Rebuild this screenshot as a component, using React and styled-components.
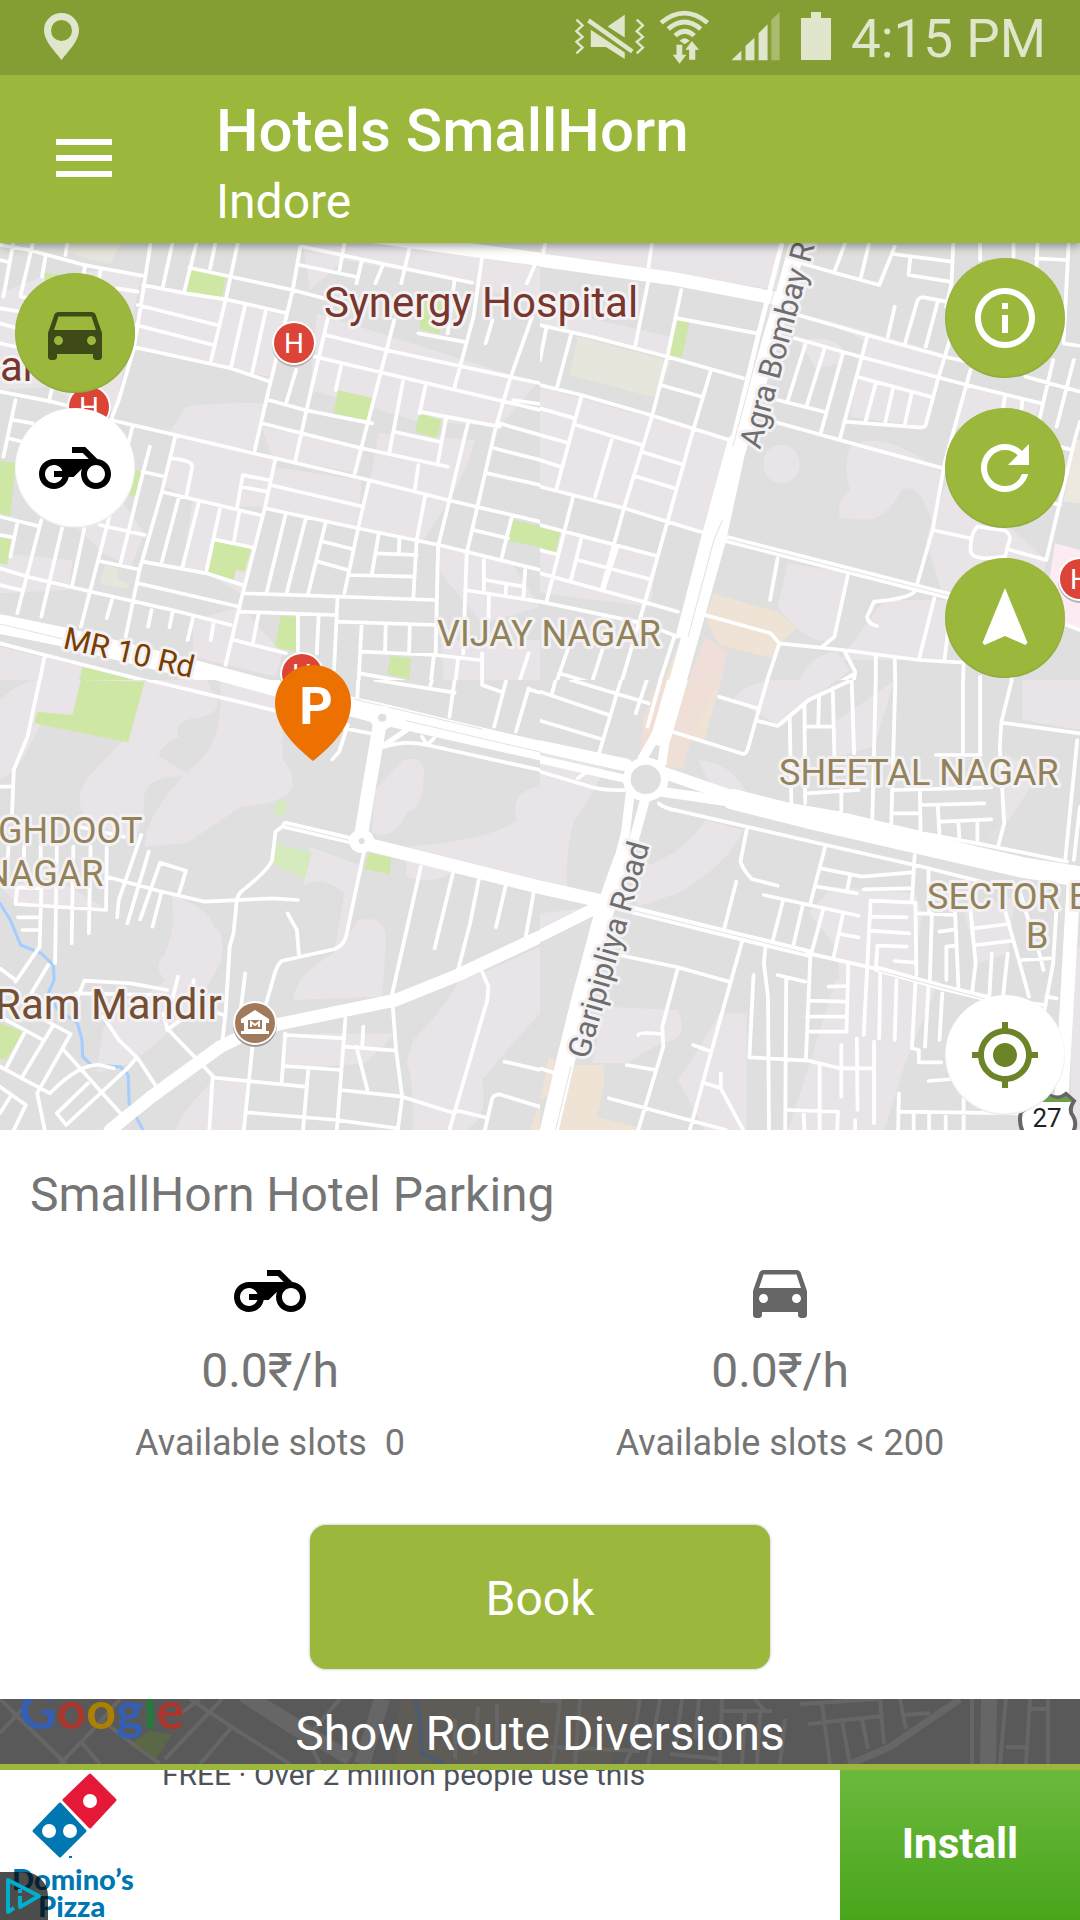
import React from 'react'
import styled, { createGlobalStyle } from 'styled-components'
import { MdDirectionsCar, MdInfoOutline, MdMyLocation, MdNavigation, MdRefresh } from 'react-icons/md'

const GlobalStyles = createGlobalStyle`
  * {
    box-sizing:border-box;
  }

  body {
    margin:0;
    font-family:Roboto, sans-serif;
    background:#fff;
  }

  h1, h2, p {
    margin:0;
    font-weight:400;
  }

  button {
    border:0;
    padding:0;
    font-family:inherit;
    cursor:pointer;
  }

  svg {
    display:block;
  }
`;

const Page = styled.div`
  display:flex;
  flex-direction:column;
  min-height:100vh;
`;

const StatusBar = styled.div`
  position:relative;
  z-index:2;
  display:flex;
  align-items:center;
  height:75px;
  padding:0 34px 3px 44px;
  background:#859e33;
  color:#e0e6cb;
`;

const StatusIcons = styled.div`
  display:flex;
  align-items:center;
  gap:20px;
  margin-left:auto;
`;

const IconPair = styled.div`
  display:flex;
  align-items:center;
  gap:12px;
`;

const Clock = styled.span`
  font-size:53px;
  line-height:72px;
  padding-top:6px;
`;

const Header = styled.header`
  position:relative;
  z-index:1;
  display:flex;
  align-items:center;
  gap:104px;
  height:168px;
  padding:0 0 2px 56px;
  background:#9bb83c;
  color:#fff;
  box-shadow:0 2px 10px rgba(0,0,0,0.45);
`;

const MenuButton = styled.button`
  background:none;
  color:inherit;
`;

const Heading = styled.div`
  padding-top:18px;
`;

const Title = styled.h1`
  font-size:60px;
  font-weight:500;
  line-height:70px;
`;

const Subtitle = styled.p`
  font-size:48px;
  line-height:72px;
`;

const MapArea = styled.main`
  position:relative;
  flex:1;
  min-height:600px;
  overflow:hidden;
  background:#dfdfdf;
`;

const MapCanvas = styled.svg`
  position:absolute;
  inset:0;
  width:100%;
  height:100%;
`;

const Floating = styled.div`
  position:absolute;
  ${({ $side }) => $side}:15px;
  ${({ $bottom, $top }) => ($bottom ? `bottom:${$bottom}px` : `top:${$top}px`)};
  display:flex;
  flex-direction:column;
  gap:${({ $gap }) => $gap || 0}px;
`;

const RoundButton = styled.button`
  display:flex;
  align-items:center;
  justify-content:center;
  width:120px;
  height:120px;
  border-radius:50%;
  background:${({ $light }) => ($light ? '#fff' : '#9bb83c')};
  color:${({ $tint }) => $tint || '#fff'};
  box-shadow:inset 0 -1px 2px rgba(0,0,0,0.12);
`;

const Panel = styled.section`
  display:flex;
  flex-direction:column;
  padding-bottom:30px;
  background:#fff;
  color:#757575;
`;

const PlaceName = styled.h2`
  padding:37px 30px 0;
  font-size:48px;
  line-height:56px;
`;

const Rates = styled.div`
  display:grid;
  grid-template-columns:1fr 1fr;
  padding:32px 45px 0 15px;
`;

const Rate = styled.div`
  display:flex;
  flex-direction:column;
  align-items:center;
  color:${({ $tint }) => $tint};
`;

const Price = styled.p`
  padding-top:16px;
  font-size:48px;
  line-height:56px;
  color:#757575;
`;

const Slots = styled.p`
  padding-top:20px;
  font-size:36px;
  line-height:48px;
  color:#757575;
`;

const BookButton = styled.button`
  align-self:center;
  width:460px;
  max-width:90%;
  height:144px;
  margin-top:58px;
  padding-top:2px;
  border-radius:16px;
  background:#9bb83c;
  color:#fff;
  font-size:48px;
  box-shadow:0 0 3px rgba(0,0,0,0.3);
`;

const Diversions = styled.button`
  position:relative;
  height:71px;
  overflow:hidden;
  border-bottom:6px solid #9bb83c;
  background:#595959;
  color:#fff;
  font-size:48px;
  line-height:65px;
`;

const DiversionsLabel = styled.span`
  position:relative;
  display:block;
  padding-top:2px;
`;

const Ad = styled.aside`
  position:relative;
  display:flex;
  height:150px;
  overflow:hidden;
  background:#fff;
`;

const AdText = styled.p`
  flex:1;
  margin:-13px 0 0 27px;
  font-size:30px;
  line-height:36px;
  color:#4e535b;
  white-space:nowrap;
`;

const AdChoices = styled.a`
  position:absolute;
  left:0;
  bottom:0;
  width:48px;
  height:48px;
  border-top-right-radius:24px;
  background:rgba(0,0,0,0.7);
`;

const InstallButton = styled.button`
  width:240px;
  padding-bottom:4px;
  background:linear-gradient(#6cb83c, #49a61c);
  color:#fff;
  font-size:42px;
  font-weight:700;
`;

// The map is split in four tiles, each one drawn on its own 1568x1350 grid.
const TILES = [
  {
    id: 'nw',
    x: 0,
    y: 240,
    blocks: [
      'M0 160L120 110 300 90 410 110 400 150 330 540 140 440 0 450Z',
      'M410 130L840 220 780 410 670 385 400 320Z',
      'M540 500Q640 485 775 490L740 630 660 620 490 580Z',
      'M510 590L800 660 770 800 660 800 560 780 480 740Z',
      'M880 20L1180 20 1568 80V200L1360 130 1000 60 900 150Z',
      'M920 220L1560 430 1450 560 1200 540 900 450Z',
      'M760 560L1060 620 1040 700 790 650Z',
      'M790 680L1050 720 1040 860 770 800Z',
      'M560 780L760 830 700 1060 600 1000 530 980Z',
      'M560 1140L700 1100 820 1240 800 1310 560 1250Z',
      'M1100 580L1380 600Q1350 720 1230 900L1050 860Z',
      'M100 740L350 780 420 880 380 980 300 940Z',
      'M0 940L210 960 200 1050 0 1060Z',
      'M1270 920L1480 960 1568 1100 1400 1150 1280 1000Z',
      'M1280 1200H1568V1350H1290Z',
      'M0 1220L240 1280 220 1350H0Z',
    ],
    areas: [
      ['#e6e6dc', 'M200 9H350L320 72 200 40ZM305 975L345 985 340 1018 375 1032 370 1048 290 1030Z'],
      ['#cfe7a4', 'M552 88L656 112 642 182 540 156ZM982 450L1082 475 1068 545 968 518ZM1218 520L1282 540 1268 594 1206 575ZM620 903L730 925 710 995 685 990 678 1020 600 998ZM1492 840L1568 858V922L1475 902ZM815 1128L862 1130V1236L798 1220ZM1135 1248L1193 1255 1188 1318 1124 1302ZM240 1280L420 1328 415 1350H226ZM0 663L45 668 30 828 0 820ZM0 892L38 900 20 975 0 970ZM395 690L410 695 395 768 375 764ZM130 97L180 108 130 130ZM1225 170L1290 190 1275 282 1218 265Z'],
    ],
    roads: [
      'M0 15L85 30 245 75 412 107M0 60L20 65M38 12L10 170M95 12L60 165M195 12L190 45M133 45L122 110M248 75L242 105M293 85L288 115',
      'M437 12L390 320 345 480 322 540M340 145L400 155M415 135L540 160 655 178 828 218M500 12L472 145M570 12L535 155M625 12L610 85M690 12L655 180 612 365',
      'M550 83L850 150 960 180M872 20L850 150 780 450 740 630M1000 10L985 95M880 20L1060 60 1370 128M870 75L1040 112M1050 65L1035 130M1110 80L1090 130M1190 20L1165 130',
      'M1320 120L1300 280M1400 50L1375 230 1320 440M1555 70L1530 130M400 195L630 255M395 255L620 315M385 320L670 385 785 425M712 195L670 385M772 210L732 400',
      'M945 285L1120 330 1568 430M915 350L1240 430 1568 510M1215 280L1345 305M1145 240L1110 380 1030 700M960 200L890 510 858 660M780 480L885 510 1080 550M760 550L1050 625 1300 680',
      'M860 390L832 485M990 380L975 450M1170 425L1130 640M1235 440L1218 520M1218 515L1450 560M1145 575L1275 605M1295 535L1270 675M1360 545L1305 780 1272 920 1265 1240',
      'M1545 230L1480 420 1440 560 1355 940 1345 1240M1430 240L1410 310M1490 480L1568 492M1450 550L1568 585M1435 625L1568 660M1415 700L1568 735',
      'M322 540L510 585 800 655 1070 720 1300 780 1568 845M1070 730L1040 865 1000 1060M1215 675L1205 745M1235 765L1210 900 1200 1075M800 655L770 800 700 1080 655 1275',
      'M495 655Q560 660 558 680L542 765M510 585L470 755 405 990 365 1190M470 755L755 825M780 720L705 705 688 805M700 740L775 755M785 735L1055 800',
      'M520 770L470 965M578 785L530 980M640 800L600 990M695 815L680 900M620 898L730 922M770 805L1040 865 1275 915 1355 935 1568 990',
      'M830 820L775 1055M888 835L832 1060M945 850L895 1060M940 905L1025 928M925 965L1010 990M1100 880L1080 1000M1160 895L1158 940M1095 940L1210 945M1010 1005L1200 1010',
      'M710 1060L1265 1080M695 1115L970 1125M980 1075L970 1290M980 1145L1265 1155M750 1125L735 1205M865 1125V1235M925 1130L920 1240M680 1200L830 1240',
      'M1050 1155L1040 1350M1120 1155L1118 1235M1190 1155L1188 1235M1050 1235L1265 1245 1390 1260M1375 870L1475 895M1485 835L1455 960M1405 960V1050M1410 1020L1520 1040M1350 1050L1568 1085',
      'M1525 990L1520 1070M1470 1035L1468 1060M1420 1060L1418 1140M1400 1240V1330L1470 1350M1535 1240L1500 1350M1045 1300L1310 1350M1260 1245L1250 1335M1330 1255L1320 1350',
      'M0 830L110 858M120 840L50 1120M50 850L30 950M0 885L40 892M180 865L120 1130M245 865L210 1035M320 820L235 1160M290 855L420 885M285 962L400 988M0 985L80 1010 265 1055 500 1110 670 1155',
      'M0 1035L60 1050M415 965L600 1000 705 1035M400 1030L695 1100M385 560L350 700M435 620L405 740 350 970M415 695L470 708M325 1080L310 1135M440 1110L430 1160M500 1120L492 1162M560 1135L545 1200M620 1150L612 1200',
      'M0 455L150 485 210 500M150 450L142 485M45 480L10 650M40 540L95 550M25 595L65 605M0 310L45 320M0 250L50 265M0 205L60 215M60 170L120 180',
      'M0 1210L130 1245 530 1350M130 1245L110 1350',
    ],
    main: [
      ['M0 1152L180 1190 560 1288 820 1360', 58],
      ['M1060 -14L1568 58', 40],
    ],
    seams: ['M0 1152L180 1196'],
  },
  {
    id: 'ne',
    x: 540,
    y: 240,
    blocks: [
      'M0 9H700L690 150 0 40Z',
      'M0 200L380 290 370 350 0 250Z',
      'M0 440L550 600 470 870 370 845 0 740Z',
      'M750 300Q900 280 880 370L800 385Z',
      'M800 230L1170 340 1120 560 900 530 940 300Z',
      'M648 672A53 58 0 1 0 754 672A53 58 0 1 0 648 672Z',
      'M900 620Q1000 560 1165 700L1140 850Q1100 720 1050 750 1000 850 930 838L870 835Q860 780 900 750 880 680 900 620Z',
      'M720 970L900 1000 850 1200Q780 1220 690 1100Z',
      'M1120 900L1190 700 1470 960 1430 1180 1180 1100Z',
      'M1000 1080L1200 1080 1180 1260H870Z',
      'M0 860L340 950 320 1100 0 1060Z',
      'M740 1350Q780 1240 860 1235L900 1290 830 1350Z',
      'M1240 440L1450 490 1420 600 1200 560Z',
    ],
    areas: [
      ['#e6e6dc', 'M110 290L380 365 360 420 330 472 85 405Z'],
      ['#ece8df', 'M1555 600H1568V790L1520 785Z'],
      ['#fcebf3', 'M1495 910L1568 930V1170L1465 1120Z'],
      ['#eee3d5', 'M505 1062L690 1115 745 1165 695 1212 672 1255 520 1215 480 1130ZM460 1060L350 1350H380L470 1080Z'],
      ['#efdfd8', 'M480 1190L545 1235 520 1350H420Z'],
      ['#cfe7a4', 'M400 240L434 245 412 352 376 345ZM0 860L60 875 45 938 0 928Z'],
    ],
    roads: [
      'M15 12L8 45M325 12L315 80M315 120L275 325M410 150L370 350 325 530 245 800 180 1045M400 235L630 280M0 255L150 290 370 350 590 415M18 265L0 360M90 285L50 440',
      'M0 435L120 465 320 525 550 600M495 395L445 570 370 845 305 1085 230 1350M350 435L470 470M0 505L100 535M120 470L48 745M105 555L295 615M0 585L80 608M0 660L60 680M295 635L410 672M275 708L390 745M208 600L160 770',
      'M0 740L245 805 370 845 480 880M0 855L340 948M95 775L20 1080M120 895L90 1020M110 960L320 1018M225 920L185 1045M0 930L45 942M0 1000L300 1085 400 1115M0 1085L300 1150 400 1190M55 1300L220 1350M80 1230L40 1350M190 1200L150 1330M390 1190L340 1350',
      'M760 70L860 100 985 135 1030 20M885 12L855 95M955 12L930 120M1025 42L1195 65M1075 55L1070 105 1190 125M1200 12L1195 130 1180 200M1278 12V60M1375 12V50M1445 12L1440 120M1535 12L1520 310M1440 55L1530 60',
      'M750 225L950 285 1175 350 1240 365M740 295L930 350 1240 435 1455 490M1030 200L1010 290M1060 310L1095 185Q1100 170 1115 172L1180 185M1155 185L1120 320M950 290L870 600',
      'M1190 300L1155 420 1120 555Q1115 564 1100 562L885 545M920 410L1135 470M975 430L945 545M1025 445L1003 545M1080 455L1060 550M770 315L720 480M825 330L775 495M878 345L815 580M690 480L825 515M680 545L870 600 1170 685',
      'M1250 390L1175 670 1140 870 1090 1050M1350 470L1345 500M1400 485L1398 510M1490 360L1445 560M1550 360L1500 560M1410 410L1568 455M1520 310L1568 318M1568 545L1555 590 1470 960M1510 620L1545 630M1490 790L1510 795M1140 870L1250 895',
      'M1340 870L1270 860Q1250 880 1250 930 1250 955 1300 955L1350 950 1365 895Q1360 870 1340 870M1365 930L1470 960M690 955L668 1080M895 1000L855 1190 820 1220M1090 1050Q1080 1075 970 1085L950 1130Q950 1150 978 1158M1145 1075L1100 1260M1195 1090L1175 1255M1530 1155L1568 1170',
      'M480 1125L670 1180 695 1210 880 1230 1100 1260 1230 1268M695 1210L650 1350M885 1235L915 1295 908 1350M915 1300L830 1350M975 1245V1350M1030 1255L1032 1350M1230 1265L1228 1350M1278 1310V1350M1370 1310L1365 1350',
    ],
    main: [
      ['M0 60L380 115 700 178', 40],
      ['M705 0L640 260 560 600', 14],
      ['M752 0L705 180 570 640 515 900 390 1360', 50],
      ['M560 600L485 880 410 1180', 28],
      ['M545 898L900 992 1090 1042 1190 1068', 24],
    ],
    seams: ['M545 898L900 992 1090 1042 1190 1068', 'M530 840L505 900 430 1190', 'M688 120L650 270 560 620'],
  },
  {
    id: 'sw',
    x: 0,
    y: 680,
    blocks: [
      'M0 60Q60 0 120 0L80 170 40 270 0 300Z',
      'M110 0H600L630 60Q640 110 560 115 500 130 520 170 430 220 480 240L560 290Q400 280 420 380L390 500 240 400Q220 350 250 300 300 240 360 180L120 130 60 250 80 150Z',
      'M640 0H820V240Q850 260 850 320 830 370 700 380 600 450 540 490L420 500Q420 400 560 260 640 200 640 60Z',
      'M500 640Q620 700 620 740 660 760 640 850L560 1000 380 1150 280 1180 300 1040 480 900Q440 860 480 820 510 740 500 680Z',
      'M900 500L1055 560 1005 770 1040 720Q1130 700 1120 800L1110 950 850 960Q860 880 970 820L1000 640Q930 580 880 620Z',
      'M1170 240Q1240 220 1230 300 1230 380 1180 400 1150 480 1080 460L1090 330Z',
      'M1568 320Q1480 330 1500 420 1430 480 1180 500L1180 590Q1280 620 1330 560L1568 610Z',
      'M1420 870L1568 800V1000Q1480 1100 1400 1200 1420 1320 1350 1350H1200Q1200 1180 1180 1150L1200 1080Q1320 950 1330 900Z',
      'M620 1200L720 1210 710 1350H510Q530 1290 620 1200Z',
      'M830 1060H1150L1060 1150 820 1170Z',
      'M0 620L120 600 200 620 300 680 60 680Z',
    ],
    areas: [
      ['#cfe7a4', 'M235 0L420 5 372 187 100 130 108 95 210 105ZM1072 518L1137 533 1130 583 1058 566ZM0 1030L70 1055 15 1140 0 1135Z'],
      ['#d5eabd', 'M805 360L833 365 825 408 795 400ZM802 492L905 518 885 597 788 550Z'],
      ['#eee3d5', 'M1568 1260L1540 1350H1568Z'],
    ],
    water: 'M0 670L30 720 60 795 120 820 155 855 157 900 140 940 165 985 225 1030 238 1080 240 1130 265 1155 350 1160 372 1185 375 1270 415 1350',
    roads: [
      'M430 0L800 92M115 0L80 170 40 270 35 400M0 320H35M1000 145L1100 165M1120 200Q1170 180 1240 195L1568 270M1010 135L985 215 965 238M1225 170L1240 195 1260 175',
      'M830 432L800 455 790 540Q780 570 700 635 685 650 685 690L678 760 667 800 655 1000 645 1090M310 590L460 632 595 665 790 655 865 660M1058 510L1005 770Q995 800 970 808L820 842Q805 850 795 890L770 980',
      'M835 700L862 750 868 825M712 880L700 980M1222 560L1138 945 1150 1110 1168 1250 1155 1350M1315 580L1262 805M1392 590L1365 730 1330 870M1470 610L1440 742M1550 635L1525 780M1400 875L1418 920 1415 960 1305 1350',
      'M230 440L360 470M25 500L20 560M70 500L68 600M118 500V600M165 500L160 850M213 500L208 790M263 500L258 760M310 500L308 690 45 672 50 622 120 625 115 800 45 905M410 465L345 660 340 712M432 515L370 730M407 718L465 548 540 572 520 640M468 640L443 740',
      'M52 712H115M65 750H115M140 855L85 950M0 865L45 900M485 930L380 910 245 902 215 980M220 940L480 945M517 890L500 960M562 900L560 940',
      'M0 1010L125 1080M70 1060L20 1160M155 1035L65 1190M130 1020L205 1062 108 1240 130 1350M185 1110L350 1300M0 1160L145 1240Q230 1150 290 1155L330 1165M255 1210L165 1300 192 1335 370 1165 395 1135M300 1010L345 1080 400 1135 460 1230',
      'M475 1000L485 1045 620 1190M550 1000L485 1050M590 985L650 1005M0 1220L75 1275 40 1350M30 1250L0 1300M620 1193L885 1220M617 1195L608 1350M733 1100L708 1350M828 1060L818 1205M830 1065L1000 1075M825 1158L990 1170',
      'M1003 1015L978 1350M1000 1100L1150 1112M1055 1040L1052 1100M1035 1100L1068 1235M895 1170L880 1350M990 1230L1168 1250 1320 1300M715 1297L978 1320 1155 1345M1465 1145L1568 1170M1568 1280L1450 1243Q1430 1245 1428 1260L1408 1350M1320 1290L1408 1312',
      'M1040 0L1038 50M1320 0L1305 110M1470 0L1435 140M1535 25L1498 155M1090 0L1320 38M1400 0V15L1455 35M1535 28L1568 38M1255 0L1250 15',
      'M1020 55L1110 75 1568 190',
    ],
    main: [
      ['M590 -40L820 25 1110 105 1568 212', 58],
      ['M1105 120L1070 330 1046 480', 40],
      ['M830 435L1045 487', 24],
      ['M1045 487L1568 622', 40],
      ['M320 1350L440 1250 640 1100 740 1050 820 1030 1150 960 1330 885 1568 770', 38],
      ['M1110 200L1180 150', 16],
    ],
    seams: ['M1180 122L1568 216', 'M830 435L1020 482', 'M1030 58L1400 148'],
    rounds: [[1110, 113, 26, 12], [1050, 483, 26, 9]],
  },
  {
    id: 'se',
    x: 540,
    y: 680,
    blocks: [
      'M0 180L190 240Q170 330 100 420 70 520 80 640L0 630Z',
      'M0 700L170 680 0 780Z',
      'M560 60Q600 0 700 0H860L700 140Z',
      'M460 240Q560 250 600 340L500 330Z',
      'M480 420L590 450Q540 560 400 640L280 680 300 560Q420 520 480 420Z',
      'M850 620L1090 640 1110 700 1080 900 880 1000 860 800 780 700Z',
      'M190 980L400 990Q440 1080 350 1090L250 1150H150Z',
      'M400 1200Q480 1080 520 1000L600 1000V1350H480Z',
      'M860 900H1160L1060 1150 1000 1350H720L780 1160Z',
      'M1230 690L1380 650 1360 820 1270 850Z',
      'M1400 0H1568V150L1400 120Z',
      'M850 130Q950 60 1030 0L970 200 860 230Z',
      'M1280 500Q1400 400 1440 270L1350 220 1348 430Z',
      'M1545 800H1568V1350H1540Z',
    ],
    areas: [
      ['#f0dfd7', 'M390 0H525L475 190 440 180 415 265 365 262 345 160ZM345 0L300 110 290 230 340 180 370 0Z'],
      ['#eee3d5', 'M500 40L525 0 475 190 440 180ZM100 1155H185V1220L165 1310 280 1340V1350H40ZM25 1130L45 1140 20 1250 0 1260Z'],
    ],
    roads: [
      'M0 275L140 318Q180 333 250 330M110 295L130 280M0 35L200 105M45 0L35 40M235 0L170 225M90 0L315 70M310 0L278 100M350 0L312 140M0 122L180 178M385 155L590 222Q600 222 605 200L660 0M520 50L630 85M630 122L690 138 780 60 905 0',
      'M725 110L730 375M768 75L770 370M810 50L808 135M850 25L855 230M770 140H850M905 0L912 220M975 0L965 415M1032 0L1020 430M1228 0V220M1278 0V220M875 330V395M775 340L925 330M1030 330L1310 322M1103 330L1105 450M1110 375L1290 370M1028 400H1103M1155 380L1160 460M1165 425L1310 418M1215 430L1218 475M1270 425V485M1150 225H1280',
      'M730 375L870 400 1110 460 1270 490 1530 545M345 370Q360 385 400 392L830 495 1110 560 1300 610M1370 0L1340 125 1335 200 1348 430 1330 500M1340 128L1568 160M1560 180L1525 540M1568 380L1550 540M1500 680L1490 850 1465 990',
      'M600 450L582 545Q590 570 615 597L690 617M570 605L535 745M650 645L925 707M828 500L785 670M815 565L935 590 1080 577M805 620L920 640M900 590L892 630M940 628L1075 625M1088 525L1080 660M940 1065L960 662 1090 668 1093 885M960 710L1065 712M955 752L1072 760M975 870L980 797 1065 800M1030 843L1090 848',
      'M705 665L675 785M762 680L735 800M822 690L788 820M880 700L852 835M870 762L925 772M588 780L520 1030 435 1350M230 825L400 862 550 905M400 865L355 1040 358 1100 285 1350M655 800L650 850 662 950 665 1350M620 885L608 1132 780 1142 870 1165H970M785 830L772 1140M690 885L770 905M715 895L712 1350',
      'M895 855L890 1055H775M838 920L890 918M780 962L888 965M775 1010H888M988 880L985 1075M1035 900L1030 1080M1090 910L1080 1105 1100 1110V1147H1165M1128 920L1118 1100M1168 940L1160 1080M875 1095V1250M920 1075L922 1290M970 1085V1330M812 1155V1350M720 1290L865 1295 863 1350M765 1295L768 1350M915 1320V1350',
      'M1042 1240L1040 1350M1045 1295L1390 1300M1085 1300V1350M1130 1300V1350M1178 1300V1350M1230 1255V1350M1128 1203L1200 1197M445 1095L490 1112M475 1208L525 1225 590 1350M525 1180V1225M200 1255L540 1350M252 1155L335 1170M285 1065Q290 1055 350 1062M0 1165L40 1178',
      'M1138 700L1132 900M1205 690L1215 920M1250 690L1265 850 1255 935M1350 690L1420 950M1100 700L1205 705M1160 755L1205 748M1180 900V800L1205 797M1260 745L1360 732M1265 795L1375 782M1312 820L1305 945M1358 820L1345 945M1400 840L1480 835M1445 800L1462 870M1395 640L1418 720M1128 570L1130 700M1470 950L1500 955',
    ],
    main: [
      ['M0 200L250 255', 38],
      ['M0 238L250 297', 24],
      ['M402 -10L352 170', 58],
      ['M345 150L298 235', 28],
      ['M368 150L354 250', 26],
      ['M350 275L560 350', 36],
      ['M350 335L560 366', 30],
      ['M560 358L800 420 1400 562 1568 590', 62],
      ['M262 340L248 460 215 590 185 670', 26],
      ['M310 340L262 520', 28],
      ['M240 540L185 700 120 950 70 1160 25 1360', 54],
      ['M0 622L200 668', 40],
      ['M0 768L170 680', 36],
      ['M230 680L580 770 780 820', 26],
      ['M780 820L985 868', 12],
      ['M985 868L1180 925 1300 955', 20],
      ['M1300 955L1465 975', 12],
      ['M1550 600L1515 1240', 40],
    ],
    seams: ['M0 218L240 276', 'M240 684L770 818', 'M985 872L1290 956', 'M90 1160L45 1350'],
    rounds: [[307, 298, 56, 44]],
  },
]

const MapTile = ({ tile }) => (
  <svg x={tile.x} y={tile.y} width="540" height="450" viewBox="0 0 1568 1350" preserveAspectRatio="none">
    <rect width="1568" height="1350" fill="#dfdfdf" />
    <path d={tile.blocks.join('')} fill="#e8e4e8" />
    {tile.areas.map(([fill, d]) => (
      <path key={d} d={d} fill={fill} />
    ))}
    <g fill="none" strokeLinecap="round" strokeLinejoin="round">
      {tile.water && <path d={tile.water} stroke="#a5ceff" strokeWidth="9" />}
      <path d={tile.roads.join('')} stroke="#fff" strokeWidth="11" />
      {tile.main.map(([d, width]) => (
        <path key={d} d={d} stroke="#fff" strokeWidth={width} />
      ))}
      <path d={tile.seams.join('')} stroke="#e4e2e4" strokeWidth="3" />
    </g>
    {(tile.rounds || []).map(([cx, cy, outer, inner]) => (
      <g key={cx}>
        <circle cx={cx} cy={cy} r={outer + 10} fill="#fff" />
        <circle cx={cx} cy={cy} r={inner} fill="#dfdfdf" />
      </g>
    ))}
  </svg>
)

const Label = styled.text`
  font-family:Roboto, sans-serif;
  font-size:${({ $size }) => $size || 36}px;
  fill:${({ $color }) => $color || '#92825a'};
  stroke:#f3f1f3;
  stroke-width:6px;
  stroke-linejoin:round;
  paint-order:stroke;
`;

const MarkerText = styled.text`
  font-family:Roboto, sans-serif;
  font-size:${({ $size }) => $size}px;
  font-weight:${({ $bold }) => ($bold ? 700 : 400)};
  fill:#fff;
  text-anchor:middle;
`;

const HospitalMarker = ({ x, y }) => (
  <g transform={`translate(${x} ${y})`}>
    <circle cy="2" r="22" fill="#b9b4b6" />
    <circle r="22" fill="#fff" />
    <circle r="20" fill="#db4437" />
    <MarkerText y="10" $size={28}>H</MarkerText>
  </g>
)

const CityMap = () => (
  <MapCanvas viewBox="0 243 1080 887" preserveAspectRatio="xMidYMid slice" role="img" aria-label="Map of Indore">
    {TILES.map(tile => (
      <MapTile key={tile.id} tile={tile} />
    ))}

    <HospitalMarker x={294} y={343} />
    <HospitalMarker x={89} y={407} />
    <HospitalMarker x={302} y={674} />
    <HospitalMarker x={1080} y={579} />

    <g transform="translate(255 1023)">
      <circle cy="2" r="22" fill="#9c9698" />
      <circle r="22" fill="#fff" />
      <circle r="20" fill="#a1795b" />
      <path d="M0-13L14-4V0H11V8H14V11H-14V8H-11V0H-14V-4ZM-7-3V6H7V-3Z" fill="#fff" fillRule="evenodd" />
      <path d="M-4 4V-1L0 2 4-1V4" fill="none" stroke="#fff" strokeWidth="2" />
    </g>

    <Label x="324" y="317" $size={42} $color="#78362d">Synergy Hospital</Label>
    <Label x="0" y="381" $size={42} $color="#78362d">ar</Label>
    <Label x="-5" y="1019" $size={42} $color="#734f33">Ram Mandir</Label>
    <Label x="437" y="646">VIJAY NAGAR</Label>
    <Label x="779" y="785">SHEETAL NAGAR</Label>
    <Label x="-2" y="843">GHDOOT</Label>
    <Label x="-16" y="886">NAGAR</Label>
    <Label x="927" y="909">SECTOR E</Label>
    <Label x="1026" y="948">B</Label>
    <Label $size={31} $color="#7a3d00" transform="translate(62 648) rotate(13)">MR 10 Rd</Label>
    <Label $size={31} $color="#6e6e6e" transform="translate(760 450) rotate(-75)">Agra Bombay Rd</Label>
    <Label $size={31} $color="#6e6e6e" transform="translate(588 1060) rotate(-74)">Garipipliya Road</Label>

    <path d="M1047 1094Q1058 1101 1066 1094L1074 1101Q1068 1110 1073 1116 1078 1124 1072 1134H1024Q1018 1124 1021 1112Z" fill="#fff" stroke="#666" strokeWidth="4" />
    <path d="M1040 1102L1049 1096Q1058 1102 1066 1096L1072 1102Z" fill="#6ca044" />
    <text x="1047" y="1127" fontSize="26" textAnchor="middle" fill="#222">27</text>

    <path d="M313 665C292 665 275 682 275 703C275 728 295 746 313 761C331 746 351 728 351 703C351 682 334 665 313 665Z" fill="#ed7100" />
    <MarkerText x="316" y="724" $size={52} $bold>P</MarkerText>
  </MapCanvas>
)

const MotorcycleIcon = () => (
  <svg width="72" height="72" viewBox="0 0 24 24" fill="currentColor" aria-hidden="true">
    <path d="M19.44 9.03L15.41 5H11v2h3.59l2 2H5c-2.8 0-5 2.2-5 5s2.2 5 5 5c2.46 0 4.45-1.69 4.9-4h1.65l2.77-2.77c-.21.54-.32 1.14-.32 1.77 0 2.8 2.2 5 5 5s5-2.2 5-5c0-2.65-1.97-4.77-4.56-4.97zM7.82 15C7.4 16.15 6.28 17 5 17c-1.63 0-3-1.37-3-3s1.37-3 3-3c1.28 0 2.4.85 2.82 2H5v2h2.82zM19 17c-1.66 0-3-1.34-3-3s1.34-3 3-3 3 1.34 3 3-1.34 3-3 3z" />
  </svg>
)

const StatusIcon = ({ width, height, viewBox, children }) => (
  <svg width={width} height={height} viewBox={viewBox} preserveAspectRatio="none" fill="currentColor" aria-hidden="true">
    {children}
  </svg>
)

const Status = () => (
  <StatusBar>
    <StatusIcon width="35" height="47" viewBox="0 0 35 47">
      <path d="M17.500 0C8 0 0 7.500 0 17C0 28 10 37 17.500 47C25 37 35 28 35 17C35 7.500 27 0 17.500 0ZM17.500 7A10.500 10.500 0 1 1 17.500 28A10.500 10.500 0 1 1 17.500 7Z" />
    </StatusIcon>
    <StatusIcons>
      <IconPair>
        <StatusIcon width="72" height="47" viewBox="105 40 210 140">
          <path d="M112 60L130 77 112 94 130 111 112 126 130 143 112 160M288 60L306 77 288 94 306 111 288 126 306 143 288 160" fill="none" stroke="currentColor" strokeWidth="7" />
          <path d="M253 45V113L203 80ZM154 90L253 158V177L198 141H154Z" />
          <path d="M147 62L275 155" stroke="currentColor" strokeWidth="13" />
        </StatusIcon>
        <StatusIcon width="53" height="55" viewBox="350 25 155 165">
          <path d="M359 66Q427 9 495 66M380 85Q427 43 475 85M400 105Q428 78 456 105" fill="none" stroke="currentColor" strokeWidth="14" />
          <path d="M413 120Q428 105 443 120L428 131ZM404 132H421V162H433L413 189 393 162H404ZM441 177V147H430L449 121 470 147H459V177Z" />
        </StatusIcon>
      </IconPair>
      <StatusIcon width="50" height="50" viewBox="565 35 145 150">
        <path d="M566 183L595 154V183ZM607 183V140L633 115V183ZM645 183V102L671 75V183Z" />
        <path d="M682 183V62L706 38V183Z" opacity="0.4" />
      </StatusIcon>
      <StatusIcon width="30" height="48" viewBox="0 0 30 48">
        <path d="M10 0H20V6H30V48H0V6H10Z" />
      </StatusIcon>
      <Clock>4:15 PM</Clock>
    </StatusIcons>
  </StatusBar>
)

const GoogleText = styled.text`
  font-family:Lato, sans-serif;
  font-size:52px;
  font-weight:700;
`;

// Slice of the map that shows through behind the diversions bar
const DimmedMap = styled.svg`
  position:absolute;
  inset:0;
  width:100%;
  height:100%;
`;

const BarMap = () => (
  <DimmedMap viewBox="0 0 1080 65" preserveAspectRatio="xMidYMid slice" aria-hidden="true">
    <path d="M400 0H640L610 65H395ZM430 0" fill="#5f5c58" />
    <path d="M128 46L150 32 172 36 155 61Z" fill="#5a6845" />
    <path d="M415 0L420 20 422 54 430 59 446 65" fill="none" stroke="#4b5c70" strokeWidth="4" />
    <g fill="none" stroke="#666" strokeWidth="4">
      <path d="M0 0L20 20 66 65M0 34L32 0M60 65L92 32 120 0M82 44L100 65M100 20L160 65M190 0L235 30 290 65M165 60L222 0M200 65L232 28M240 0L310 45 320 65M310 35L340 0M180 15L200 0" />
      <path d="M455 20V60M478 8L475 55M497 5V50M540 2H560L553 65M580 0L575 65M640 0L632 50 625 65M660 0L648 65M682 0L675 50M699 0L695 40M722 0L720 65M722 12H772M755 0L765 12M550 48L640 52M670 55L720 60" />
      <path d="M745 14L742 65M760 14L757 65M780 65L785 20M800 5L880 0M808 25L882 17M822 5L830 65M842 22L850 65M862 20L868 50M880 0L884 45M900 0L906 30M904 16L930 14M972 0V65M1006 0L1000 65M1030 0L1026 65M1048 0V65M1006 48H1027M1030 10H1048" />
      <path d="M850 65L890 48 960 0" strokeWidth="7" />
      <path d="M989 0L988 65" strokeWidth="16" />
      <path d="M382 0L362 65" strokeWidth="16" />
      <path d="M240 -8L350 60" strokeWidth="14" />
    </g>
    <GoogleText x="19" y="30">
      <tspan fill="#345fb4">G</tspan>
      <tspan fill="#a9372d">o</tspan>
      <tspan fill="#ad8100">o</tspan>
      <tspan fill="#345fb4">g</tspan>
      <tspan fill="#237a3b">l</tspan>
      <tspan fill="#a9372d">e</tspan>
    </GoogleText>
  </DimmedMap>
)

const BrandText = styled.text`
  font-family:Lato, sans-serif;
  font-size:29px;
  font-weight:900;
  fill:#0077b1;
`;

const PizzaLogo = () => (
  <svg width="135" height="150" viewBox="0 0 135 150" role="img" aria-label="Domino's Pizza">
    <g strokeLinejoin="round" strokeWidth="3">
      <path d="M90 5L115 30 90 57 64 30Z" fill="#e51837" stroke="#e51837" />
      <path d="M60 34L85 61 60 86 34 61Z" fill="#0077b1" stroke="#0077b1" />
    </g>
    <circle cx="90" cy="31" r="7" fill="#fff" />
    <circle cx="49" cy="61" r="7" fill="#fff" />
    <circle cx="70" cy="61" r="7" fill="#fff" />
    <path d="M69 87H72" stroke="#0077b1" strokeWidth="2" />
    <BrandText x="12" y="120">Domino’s</BrandText>
    <BrandText x="38" y="147">Pizza</BrandText>
  </svg>
)

export default function App() {
  return (
    <>
      <GlobalStyles />
      <Page>
        <Status />
        <Header>
          <MenuButton aria-label="Open menu">
            <svg width="56" height="38" viewBox="0 0 56 38" fill="currentColor">
              <path d="M0 0H56V6H0ZM0 16H56V22H0ZM0 32H56V38H0Z" />
            </svg>
          </MenuButton>
          <Heading>
            <Title>Hotels SmallHorn</Title>
            <Subtitle>Indore</Subtitle>
          </Heading>
        </Header>

        <MapArea>
          <CityMap />
          <Floating $side="left" $top={30} $gap={15}>
            <RoundButton aria-label="Car parking" $tint="#3e4a18">
              <MdDirectionsCar size={72} />
            </RoundButton>
            <RoundButton aria-label="Motorcycle parking" $light $tint="#000">
              <MotorcycleIcon />
            </RoundButton>
          </Floating>
          <Floating $side="right" $top={15} $gap={30}>
            <RoundButton aria-label="Information">
              <MdInfoOutline size={72} />
            </RoundButton>
            <RoundButton aria-label="Refresh">
              <MdRefresh size={72} />
            </RoundButton>
            <RoundButton aria-label="Navigate">
              <MdNavigation size={72} />
            </RoundButton>
          </Floating>
          <Floating $side="right" $bottom={15}>
            <RoundButton aria-label="My location" $light $tint="#6c8427">
              <MdMyLocation size={72} />
            </RoundButton>
          </Floating>
        </MapArea>

        <Panel>
          <PlaceName>SmallHorn Hotel Parking</PlaceName>
          <Rates>
            <Rate $tint="#000">
              <MotorcycleIcon />
              <Price>0.0₹/h</Price>
              <Slots>Available slots&nbsp; 0</Slots>
            </Rate>
            <Rate $tint="#666">
              <MdDirectionsCar size={72} />
              <Price>0.0₹/h</Price>
              <Slots>Available slots &lt; 200</Slots>
            </Rate>
          </Rates>
          <BookButton>Book</BookButton>
        </Panel>

        <Diversions>
          <BarMap />
          <DiversionsLabel>Show Route Diversions</DiversionsLabel>
        </Diversions>

        <Ad>
          <PizzaLogo />
          <AdText>FREE · Over 2 million people use this</AdText>
          <InstallButton>Install</InstallButton>
          <AdChoices href="#adchoices" aria-label="AdChoices">
            <svg width="48" height="48" viewBox="0 0 48 48" fill="none" stroke="#00aecd" strokeWidth="4" strokeLinejoin="round">
              <path d="M14 36L8 40V8L39 24 20 35V24" />
              <path d="M20 17V21" />
            </svg>
          </AdChoices>
        </Ad>
      </Page>
    </>
  )
}
